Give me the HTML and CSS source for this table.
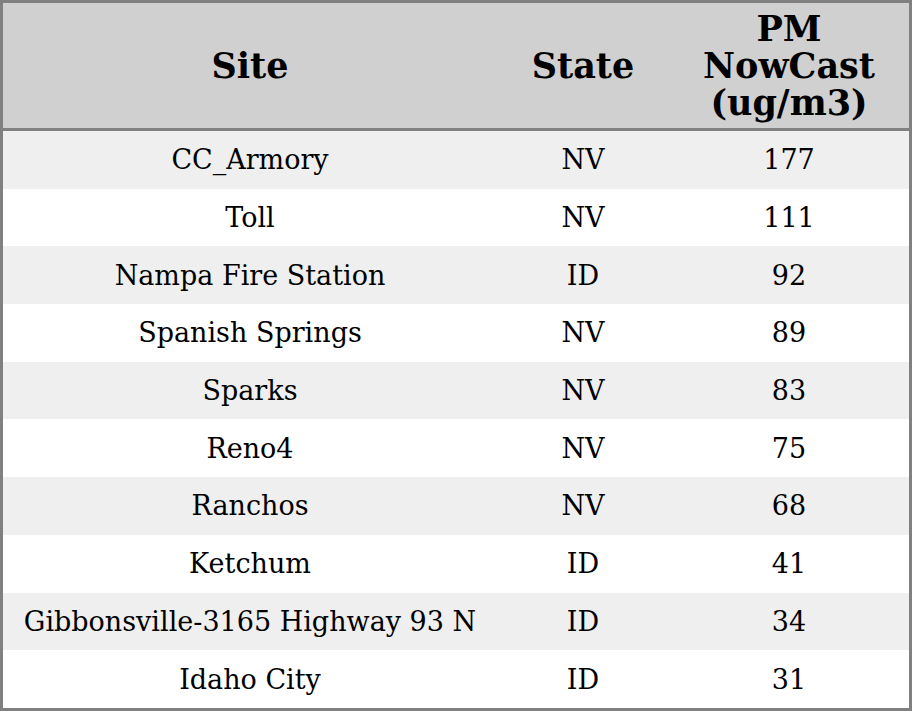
FILE: index.html
```html
<!DOCTYPE html>
<html>
<head>
<meta charset="utf-8">
<link rel="stylesheet" href="styles.css">
</head>
<body>
<table class="data">
  <colgroup>
    <col class="c-site">
    <col class="c-state">
    <col class="c-pm">
  </colgroup>
  <thead>
    <tr><th>Site</th><th>State</th><th>PM<br>NowCast<br>(ug/m3)</th></tr>
  </thead>
  <tbody>
    <tr><td>CC_Armory</td><td>NV</td><td>177</td></tr>
    <tr><td>Toll</td><td>NV</td><td>111</td></tr>
    <tr><td>Nampa Fire Station</td><td>ID</td><td>92</td></tr>
    <tr><td>Spanish Springs</td><td>NV</td><td>89</td></tr>
    <tr><td>Sparks</td><td>NV</td><td>83</td></tr>
    <tr><td>Reno4</td><td>NV</td><td>75</td></tr>
    <tr><td>Ranchos</td><td>NV</td><td>68</td></tr>
    <tr><td>Ketchum</td><td>ID</td><td>41</td></tr>
    <tr><td>Gibbonsville-3165 Highway 93 N</td><td>ID</td><td>34</td></tr>
    <tr><td>Idaho City</td><td>ID</td><td>31</td></tr>
  </tbody>
</table>
</body>
</html>
```
FILE: styles.css
```css
html, body {
  margin: 0;
  padding: 0;
  background: #ffffff;
}
.data {
  width: 912px;
  height: 711px;
  border: 3px solid #808080;
  border-collapse: separate;
  border-spacing: 0;
  table-layout: fixed;
  font-family: "DejaVu Serif", serif;
  color: #000;
}
.c-site { width: 494px; }
.c-state { width: 172px; }
.c-pm { width: 240px; }
.data th {
  background: #d0d0d0;
  font-weight: bold;
  font-size: 35px;
  line-height: 37px;
  height: 125px;
  padding: 0;
  border-bottom: 3px solid #808080;
  text-align: center;
  vertical-align: middle;
}
.data td {
  font-size: 27px;
  height: 57.7px;
  padding: 0;
  text-align: center;
  vertical-align: middle;
}
.data tbody tr:nth-child(odd) td {
  background: #efefef;
}
.data tbody tr:nth-child(even) td {
  background: #ffffff;
}
```
